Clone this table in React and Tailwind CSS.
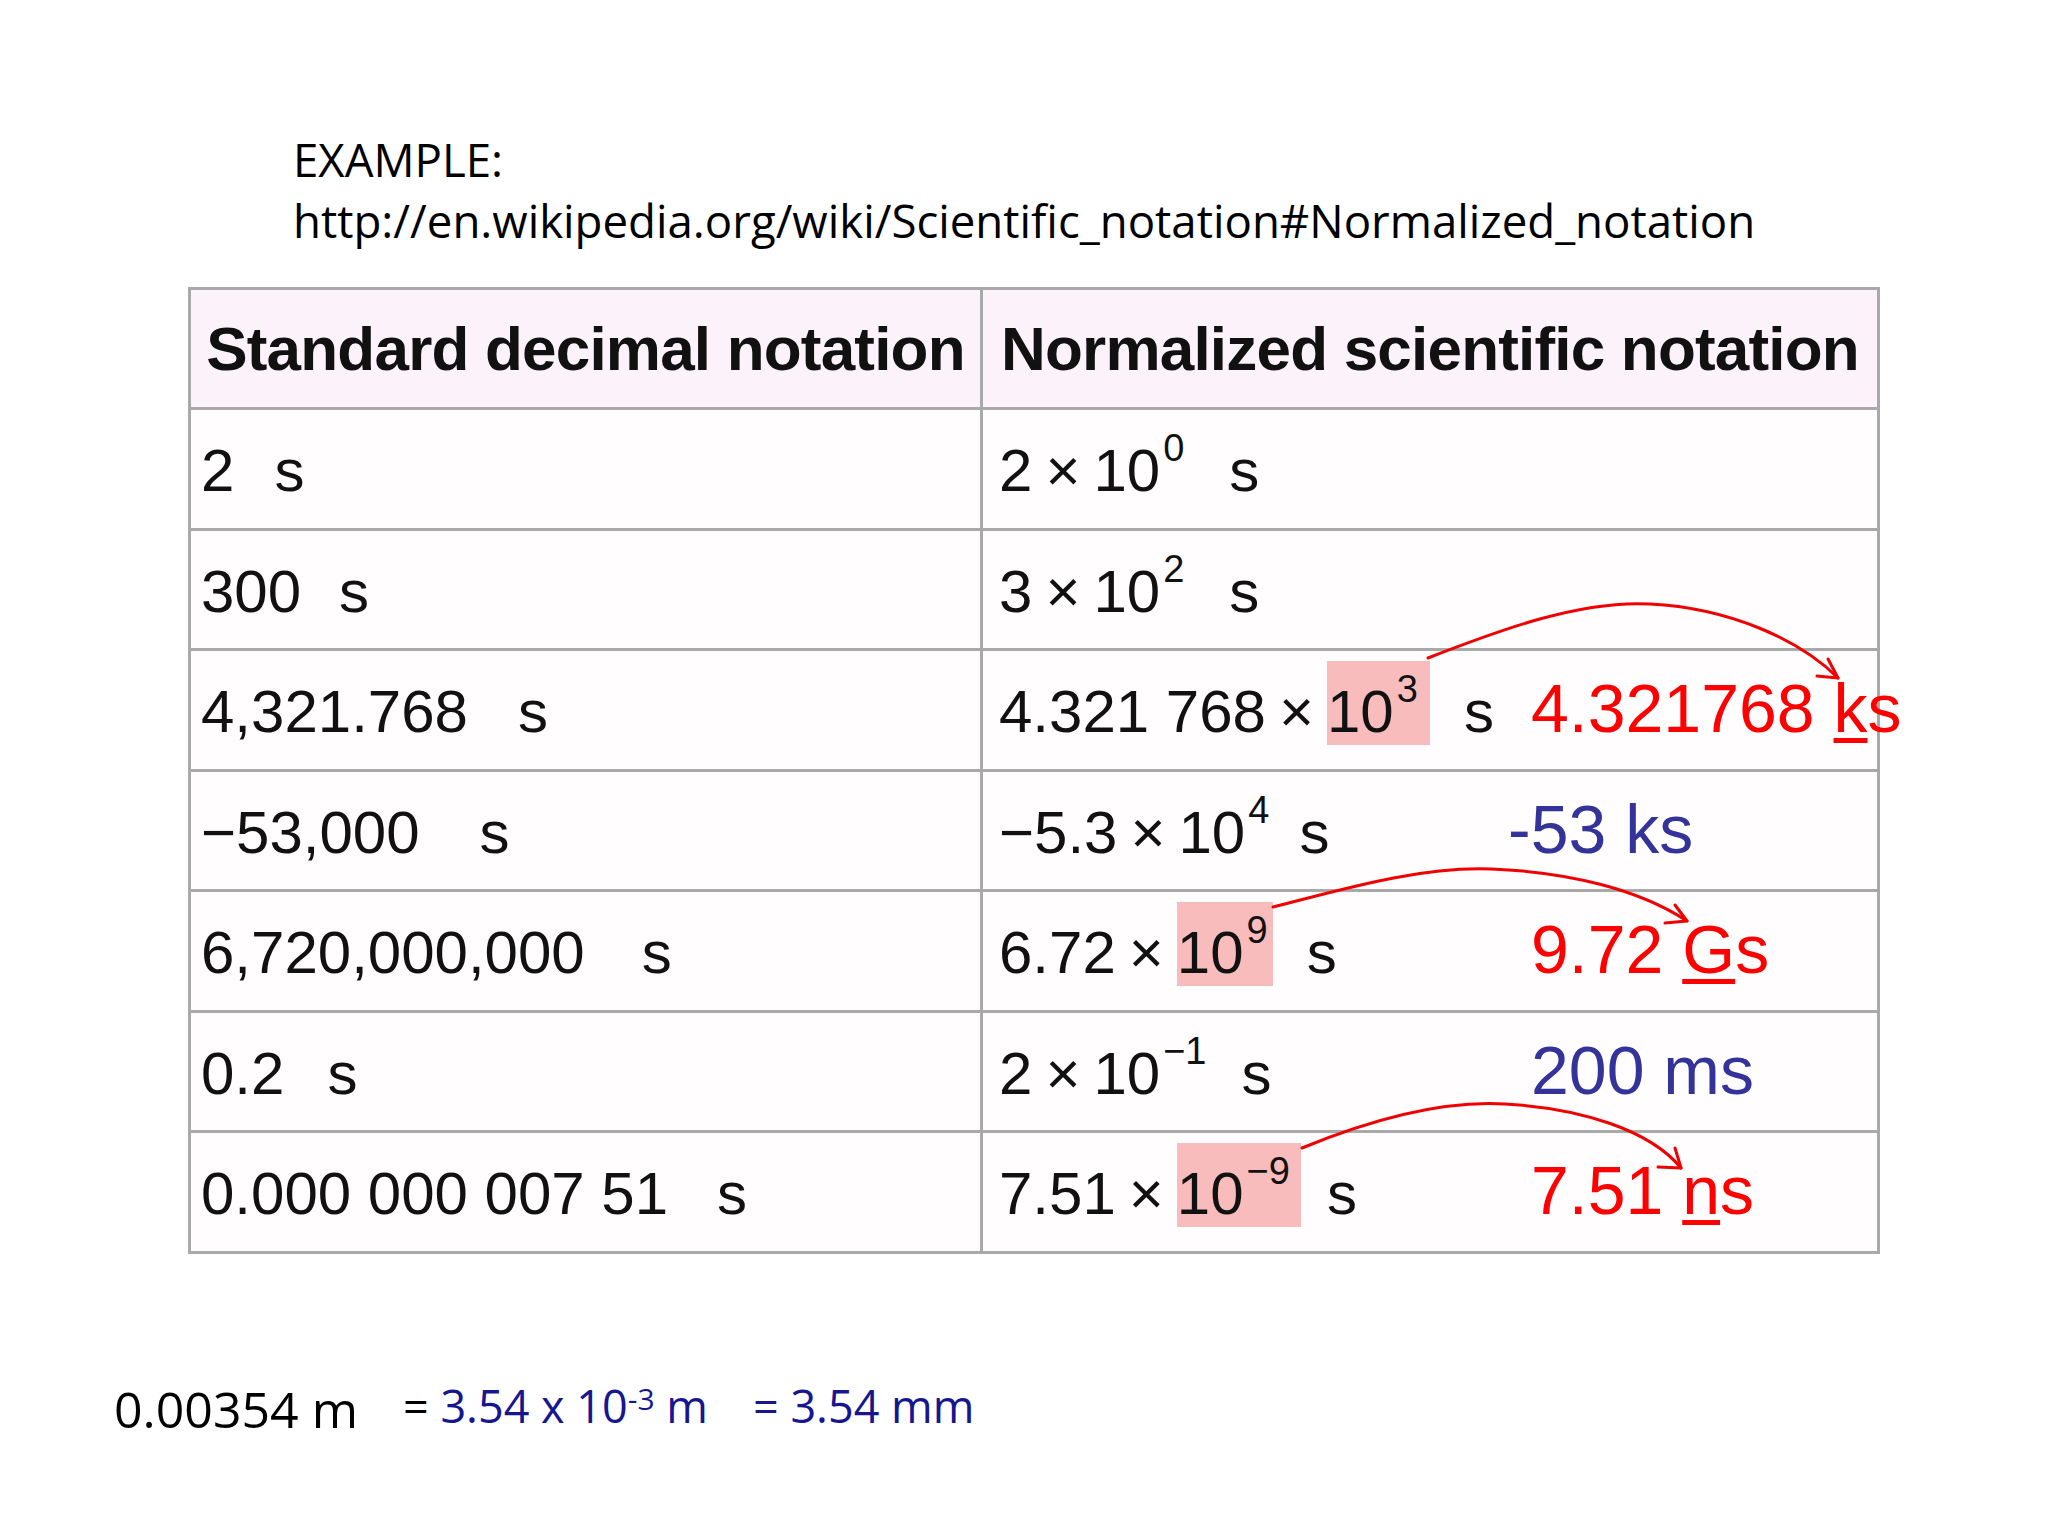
import React from "react";

const LEFT = [
  { n: "2", ml: "ml-[40px]" },
  { n: "300", ml: "ml-[38px]" },
  { n: "4,321.768", ml: "ml-[50px]" },
  { n: "\u221253,000", ml: "ml-[60px]" },
  { n: "6,720,000,000", ml: "ml-[57px]" },
  { n: "0.2", ml: "ml-[43px]" },
  { n: "0.000 000 007 51", ml: "ml-[49px]" },
];

function Ann({ kind, pre, u, post }) {
  const color = kind === "red" ? "text-[#ff0000]" : "text-[#333399]";
  return (
    <span className={`text-[68px] leading-[50px] ${color}`}>
      {pre}
      {u ? (
        <span className="underline decoration-[length:5px] underline-offset-[6px]">{u}</span>
      ) : null}
      {post}
    </span>
  );
}

const RIGHT = [
  { m: "2", e: "0", hl: null, sml: "ml-[45px]", ann: null },
  { m: "3", e: "2", hl: null, sml: "ml-[45px]", ann: null },
  {
    m: "4.321 768",
    e: "3",
    hl: "pr-[12px]",
    sml: "ml-[34px]",
    ann: <Ann kind="red" pre={"4.321768 "} u="k" post="s" />,
  },
  {
    m: "\u22125.3",
    e: "4",
    hl: null,
    sml: "ml-[30px]",
    ann: (
      <span className="-ml-[23px]">
        <Ann kind="blue" pre="-53 ks" />
      </span>
    ),
  },
  {
    m: "6.72",
    e: "9",
    hl: "pr-[5px]",
    sml: "ml-[34px]",
    ann: <Ann kind="red" pre={"9.72 "} u="G" post="s" />,
  },
  {
    m: "2",
    e: "\u22121",
    hl: null,
    sml: "ml-[35px]",
    ann: <Ann kind="blue" pre="200 ms" />,
  },
  {
    m: "7.51",
    e: "\u22129",
    hl: "pr-[11px]",
    sml: "ml-[26px]",
    ann: <Ann kind="red" pre={"7.51 "} u="n" post="s" />,
  },
];

function Pow({ e }) {
  return (
    <>
      10<span className="relative -top-[30px] ml-[3px] text-[38px] leading-none">{e}</span>
    </>
  );
}

export default function App() {
  return (
    <div className="relative w-[2048px] h-[1536px] bg-white overflow-hidden">
      {/* Title */}
      <div className="pl-[293px] pt-[129px] font-['Open_Sans',sans-serif] text-[45.6px] leading-[61px] text-black">
        <div>EXAMPLE:</div>
        <div>http://en.wikipedia.org/wiki/Scientific_notation#Normalized_notation</div>
      </div>

      {/* Table */}
      <div className="mt-[36px] ml-[188px] w-fit grid grid-cols-[789px_894px] grid-rows-[117px_118px_117px_118px_117px_118px_117px_118px] gap-[3px] p-[3px] bg-[#a9a9a9] font-['Liberation_Sans',Arial,sans-serif] text-[#111]">
        <div className="bg-[#fcf3fa] pt-[28px] text-center text-[62px] leading-none font-bold tracking-[-0.8px] whitespace-nowrap">
          Standard decimal notation
        </div>
        <div className="bg-[#fcf3fa] pt-[28px] text-center text-[62px] leading-none font-bold tracking-[-0.8px] whitespace-nowrap">
          Normalized scientific notation
        </div>
        {LEFT.map((l, i) => {
          const r = RIGHT[i];
          return (
            <React.Fragment key={i}>
              <div className="bg-[#fffdfe] pl-[10px] pt-[31px] text-[60px] leading-none whitespace-nowrap">
                {l.n}
                <span className={l.ml}>s</span>
              </div>
              <div className="bg-[#fffdfe] pl-[16px] pt-[31px] text-[60px] leading-none whitespace-nowrap">
                <span className="inline-block w-[532px]">
                  {r.m}
                  <span className="mx-[13px]">×</span>
                  {r.hl ? (
                    <span className={`bg-[#f8bcbc] pt-[17px] ${r.hl}`}>
                      <Pow e={r.e} />
                    </span>
                  ) : (
                    <Pow e={r.e} />
                  )}
                  <span className={r.sml}>s</span>
                </span>
                {r.ann}
              </div>
            </React.Fragment>
          );
        })}
      </div>

      {/* Bottom example */}
      <div className="mt-[129px] pl-[114px] font-['Open_Sans',sans-serif] text-[50px] leading-none whitespace-nowrap text-black">
        0.00354 m
        <span className="ml-[45px] align-[5px] text-[45px]">
          ={" "}
          <span className="text-[#16168f]">
            3.54 x 10<span className="align-[13px] text-[30px]">-3</span> m
          </span>
        </span>
        <span className="ml-[45px] align-[5px] text-[45px] text-[#16168f]">= 3.54 mm</span>
      </div>

      {/* Arrows overlay */}
      <svg
        className="absolute left-0 top-0 pointer-events-none"
        width="2048"
        height="1536"
        viewBox="0 0 2048 1536"
        fill="none"
        stroke="#f00000"
        strokeWidth="3"
        strokeLinecap="round"
        strokeLinejoin="round"
      >
        <path d="M1428 658 C1500 630 1580 600 1650 604 C1730 608 1800 640 1838 678" />
        <path d="M1828 659 L1838 678 L1817 676" />
        <path d="M1273 907 C1340 890 1420 866 1491 869 C1570 872 1640 890 1687 921" />
        <path d="M1675 905 L1687 921 L1665 923" />
        <path d="M1302 1148 C1370 1120 1440 1100 1505 1104 C1580 1108 1650 1130 1681 1168" />
        <path d="M1675 1148 L1681 1168 L1658 1167" />
      </svg>
    </div>
  );
}
